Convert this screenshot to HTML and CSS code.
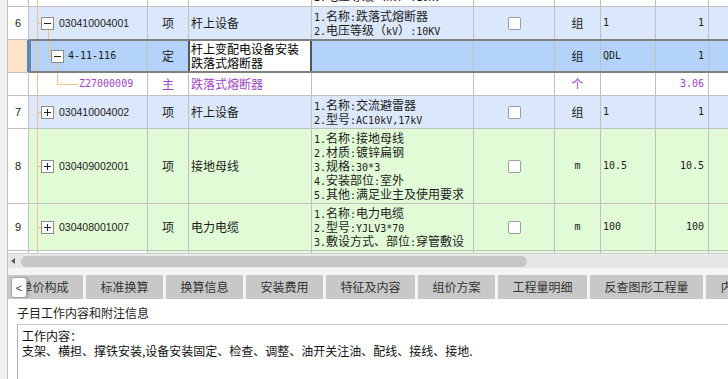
FILE: index.html
```html
<!DOCTYPE html>
<html lang="zh-CN">
<head>
<meta charset="utf-8">
<title>分部分项</title>
<link rel="stylesheet" href="styles.css">
</head>
<body>
<div class="app">
  <div class="side"></div>
  <div class="main">
    <div class="grid">
      <div class="row top r6">
        <div class="c num"></div>
        <div class="c code t0"></div>
        <div class="c"></div>
        <div class="c"></div>
        <div class="c feat"><div class="lines"><div><span class="m">2.</span>电压等级（<span class="m">kV</span>）<span class="m">:10KV</span></div></div></div>
        <div class="c"></div>
        <div class="c"></div>
        <div class="c"></div>
        <div class="c"></div>
        <div class="c"></div>
      </div>

      <div class="row blue r32">
        <div class="c num">6</div>
        <div class="c code t1 open"><span class="tb"></span><span class="cd">030410004001</span></div>
        <div class="c ctr">项</div>
        <div class="c nm">杆上设备</div>
        <div class="c feat"><div class="lines">
          <div><span class="m">1.</span>名称<span class="m">:</span>跌落式熔断器</div>
          <div><span class="m">2.</span>电压等级（<span class="m">kV</span>）<span class="m">:10KV</span></div>
        </div></div>
        <div class="c ctr"><span class="chk"></span></div>
        <div class="c ctr">组</div>
        <div class="c expr"><span class="m">1</span></div>
        <div class="c qty"><span class="m">1</span></div>
        <div class="c"></div>
      </div>

      <div class="row sel">
        <div class="c num"></div>
        <div class="c code t2"><span class="tb"></span><span class="m code2">4-11-116</span></div>
        <div class="c ctr">定</div>
        <div class="c nm edit"><div class="lines"><div>杆上变配电设备安装</div><div>跌落式熔断器</div></div></div>
        <div class="c feat"></div>
        <div class="c ctr"></div>
        <div class="c ctr">组</div>
        <div class="c expr"><span class="m">QDL</span></div>
        <div class="c qty"><span class="m">1</span></div>
        <div class="c"></div>
      </div>

      <div class="row white r22">
        <div class="c num"></div>
        <div class="c code t3"><span class="m pur">Z27000009</span></div>
        <div class="c ctr pur">主</div>
        <div class="c nm pur">跌落式熔断器</div>
        <div class="c feat"></div>
        <div class="c ctr"></div>
        <div class="c ctr pur">个</div>
        <div class="c expr"></div>
        <div class="c qty"><span class="m pur">3.06</span></div>
        <div class="c"></div>
      </div>

      <div class="row blue r32">
        <div class="c num">7</div>
        <div class="c code t1"><span class="tb plus"></span><span class="cd">030410004002</span></div>
        <div class="c ctr">项</div>
        <div class="c nm">杆上设备</div>
        <div class="c feat"><div class="lines">
          <div><span class="m">1.</span>名称<span class="m">:</span>交流避雷器</div>
          <div><span class="m">2.</span>型号<span class="m">:AC10kV,17kV</span></div>
        </div></div>
        <div class="c ctr"><span class="chk"></span></div>
        <div class="c ctr">组</div>
        <div class="c expr"><span class="m">1</span></div>
        <div class="c qty"><span class="m">1</span></div>
        <div class="c"></div>
      </div>

      <div class="row green r74">
        <div class="c num">8</div>
        <div class="c code t1"><span class="tb plus"></span><span class="cd">030409002001</span></div>
        <div class="c ctr">项</div>
        <div class="c nm">接地母线</div>
        <div class="c feat"><div class="lines">
          <div><span class="m">1.</span>名称<span class="m">:</span>接地母线</div>
          <div><span class="m">2.</span>材质<span class="m">:</span>镀锌扁钢</div>
          <div><span class="m">3.</span>规格<span class="m">:30*3</span></div>
          <div><span class="m">4.</span>安装部位<span class="m">:</span>室外</div>
          <div><span class="m">5.</span>其他<span class="m">:</span>满足业主及使用要求</div>
        </div></div>
        <div class="c ctr"><span class="chk"></span></div>
        <div class="c ctr"><span class="m">m</span></div>
        <div class="c expr"><span class="m">10.5</span></div>
        <div class="c qty"><span class="m">10.5</span></div>
        <div class="c"></div>
      </div>

      <div class="row green r46">
        <div class="c num">9</div>
        <div class="c code t1"><span class="tb plus"></span><span class="cd">030408001007</span></div>
        <div class="c ctr">项</div>
        <div class="c nm">电力电缆</div>
        <div class="c feat"><div class="lines">
          <div><span class="m">1.</span>名称<span class="m">:</span>电力电缆</div>
          <div><span class="m">2.</span>型号<span class="m">:YJLV3*70</span></div>
          <div><span class="m">3.</span>敷设方式、部位<span class="m">:</span>穿管敷设</div>
        </div></div>
        <div class="c ctr"><span class="chk"></span></div>
        <div class="c ctr"><span class="m">m</span></div>
        <div class="c expr"><span class="m">100</span></div>
        <div class="c qty"><span class="m">100</span></div>
        <div class="c"></div>
      </div>

      <div class="row green r2">
        <div class="c num"></div>
        <div class="c code t0 wcell"></div>
        <div class="c"></div>
        <div class="c"></div>
        <div class="c"></div>
        <div class="c"></div>
        <div class="c"></div>
        <div class="c"></div>
        <div class="c"></div>
        <div class="c"></div>
      </div>
    </div>

    <div class="hscroll"><span class="arrow"></span><span class="thumb"></span></div>

    <div class="tabbar">
      <div class="tabs">
        <div class="tab">单价构成</div>
        <div class="tab">标准换算</div>
        <div class="tab">换算信息</div>
        <div class="tab">安装费用</div>
        <div class="tab">特征及内容</div>
        <div class="tab">组价方案</div>
        <div class="tab">工程量明细</div>
        <div class="tab">反查图形工程量</div>
        <div class="tab">内容指引</div>
      </div>
      <div class="tabprev">&lt;</div>
    </div>

    <div class="panel">
      <div class="plabel">子目工作内容和附注信息</div>
      <div class="pbox">
        <div>工作内容：</div>
        <div>支架、横担、撑铁安装,设备安装固定、检查、调整、油开关注油、配线、接线、接地.</div>
      </div>
    </div>
  </div>
</div>
</body>
</html>
```

FILE: styles.css
```css
* { box-sizing: border-box; }
html, body { margin: 0; padding: 0; }
body {
  width: 728px;
  height: 379px;
  overflow: hidden;
  background: #fff;
  font-family: "Noto Sans CJK SC", sans-serif;
}
.app { display: flex; height: 379px; }
.side {
  width: 8px;
  flex: none;
  background: #f0f0f0;
  border-right: 1px solid #c4c4c4;
}
.main {
  width: 720px;
  flex: none;
  display: flex;
  flex-direction: column;
  overflow: hidden;
}

/* grid */
.grid {
  flex: none;
  display: flex;
  flex-direction: column;
  gap: 1px;
  background: #c0c0c0;
}
.row {
  display: grid;
  grid-template-columns: 20px 118px 40px 122px 161px 80px 45px 54px 52px 60px;
  column-gap: 1px;
  background: #c0c0c0;
}
.r2 { height: 2px; }
.r6 { height: 6px; }
.r22 { height: 22px; }
.r32 { height: 32px; }
.r46 { height: 46px; }
.r74 { height: 74px; }

.c {
  display: flex;
  align-items: center;
  overflow: hidden;
  white-space: nowrap;
  font-size: 12px;
  line-height: 14px;
  color: #1c1c1c;
  background-color: #fff;
  min-width: 0;
}
.blue .c { background-color: #dbe7fb; }
.green .c { background-color: #e1fbd6; }
.blue .num, .green .num, .green .wcell { background-color: #fff; }

.num {
  justify-content: center;
  font-family: "Liberation Sans", sans-serif;
  font-size: 11px;
}
.ctr { justify-content: center; }
.nm { padding-left: 2px; }
.feat { padding-left: 2px; }
.lines { line-height: 13.9px; }
.lines .m { line-height: 0; }
.expr { padding-left: 2px; }
.qty { justify-content: flex-end; padding-right: 4px; }
.m { font-family: "DejaVu Sans Mono", monospace; font-size: 10px; }
.cd { font-family: "Liberation Sans", sans-serif; font-size: 10.5px; margin-left: 5px; }
.code2 { margin-left: 4px; }
.pur { color: #a043c4; }
.top .feat { align-items: flex-start; }
.top .feat .lines { margin-top: -11px; }

/* tree */
.code { padding-left: 12px; background-repeat: no-repeat; }
.t0 {
  background-image: linear-gradient(#f6c186, #f6c186);
  background-position: 8px 0;
  background-size: 1px 100%;
}
.t1 {
  background-image: linear-gradient(#f6c186, #f6c186), linear-gradient(#f6c186, #f6c186);
  background-position: 8px 0, 8px 50%;
  background-size: 1px 100%, 4px 1px;
}
.t1.open {
  background-image: linear-gradient(#f6c186, #f6c186), linear-gradient(#f6c186, #f6c186), linear-gradient(#f6c186, #f6c186);
  background-position: 8px 0, 8px 50%, 19px 100%;
  background-size: 1px 100%, 4px 1px, 1px 50%;
}
.t2 {
  padding-left: 22px;
  background-image: linear-gradient(#f6c186, #f6c186), linear-gradient(#f6c186, #f6c186), linear-gradient(#f6c186, #f6c186), linear-gradient(#f6c186, #f6c186);
  background-position: 8px 0, 19px 0, 19px 50%, 28px 100%;
  background-size: 1px 100%, 1px 50%, 3px 1px, 1px 50%;
}
.t3 {
  padding-left: 50px;
  background-image: linear-gradient(#f6c186, #f6c186), linear-gradient(#f6c186, #f6c186), linear-gradient(#f6c186, #f6c186);
  background-position: 8px 0, 28px 0, 28px 50%;
  background-size: 1px 100%, 1px 50%, 21px 1px;
}
.tb {
  position: relative;
  flex: none;
  width: 13px;
  height: 13px;
  border: 1px solid #8c8c8c;
  background: #fff;
}
.tb::before {
  content: "";
  position: absolute;
  left: 2px;
  right: 2px;
  top: 5px;
  height: 1px;
  background: #222;
}
.tb.plus::after {
  content: "";
  position: absolute;
  top: 2px;
  bottom: 2px;
  left: 5px;
  width: 1px;
  background: #222;
}
.chk {
  width: 13px;
  height: 13px;
  border: 1px solid #9c9c9c;
  border-radius: 2px;
  background: #fff;
}

/* selected row */
.sel {
  height: 34px;
  margin: -1px 0;
  border-top: 2px solid #808080;
  border-bottom: 2px solid #808080;
}
.sel .c { background-color: #b3d3fb; }
.sel .num {
  margin: -2px -1px -2px 0;
  border-top: 1px solid #c0c0c0;
  border-bottom: 1px solid #c0c0c0;
  background-color: #fde4c7;
  box-shadow: inset -2px 0 0 #3c8de6;
}
.sel .code { box-shadow: inset 2px 0 0 #808080; }
.sel .edit {
  background-color: #fff;
  color: #000;
  padding-left: 1px;
  border-left: 1px solid #555;
  border-right: 1px solid #555;
  box-shadow: -1px 0 0 #555, 1px 0 0 #555;
}

/* horizontal scrollbar */
.hscroll {
  flex: none;
  height: 15px;
  background: #e7e7e7;
  border-top: 1px solid #d0d0d0;
  display: flex;
  align-items: center;
  padding-left: 3px;
}
.arrow {
  width: 0;
  height: 0;
  border-top: 3.5px solid transparent;
  border-bottom: 3.5px solid transparent;
  border-right: 4px solid #5a5a5a;
}
.thumb {
  margin-left: 6px;
  width: 506px;
  height: 11px;
  border-radius: 6px;
  background: #c6c6c6;
}

/* tabs */
.tabbar {
  position: relative;
  flex: none;
  height: 31px;
  padding-top: 7px;
  background: #f5f5f5;
  overflow: hidden;
}
.tabs {
  display: flex;
  gap: 3px;
  margin-left: -2px;
}
.tab {
  flex: none;
  height: 24px;
  padding: 0 14.5px;
  background: #c8c8c8;
  font-size: 12px;
  line-height: 24px;
  color: #333;
  white-space: nowrap;
}
.tabprev {
  position: absolute;
  left: 3px;
  top: 9px;
  width: 16px;
  height: 21px;
  border: 1px solid #a6a6a6;
  border-radius: 3px;
  background: #fbfbfb;
  color: #444;
  font: 11px "Liberation Sans", sans-serif;
  display: flex;
  align-items: center;
  justify-content: center;
  box-shadow: 2px 0 2px rgba(0, 0, 0, 0.15);
}

/* bottom panel */
.panel {
  flex: 1;
  background: #fff;
  padding: 6px 0 0 9px;
}
.plabel {
  font-size: 12px;
  line-height: 16px;
  color: #222;
}
.pbox {
  margin-top: 3px;
  height: 80px;
  border-top: 1px solid #c8c8c8;
  border-left: 1px solid #b0b0b0;
  padding: 3px 0 0 4px;
  font-size: 12px;
  line-height: 15px;
  color: #111;
  white-space: nowrap;
}
```
